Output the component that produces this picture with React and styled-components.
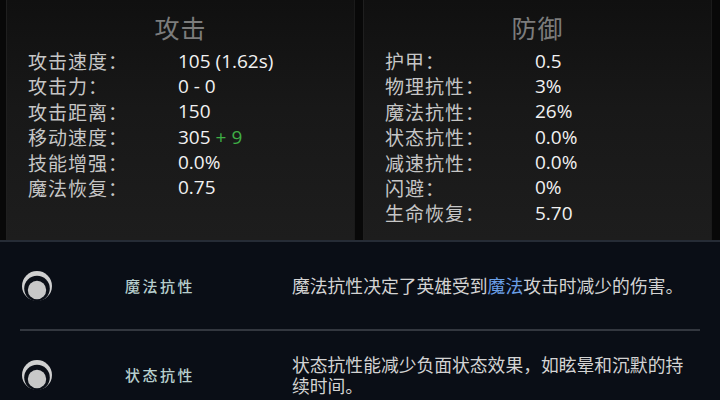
import React from "react";
import styled, { createGlobalStyle } from "styled-components";

const GlobalStyle = createGlobalStyle`
  html, body {
    margin: 0;
    padding: 0;
    background: #080808;
  }
  body {
    font-family: "Open Sans", "Noto Sans CJK SC", sans-serif;
  }
`;

const attack = [
  { label: "攻击速度：", value: "105 (1.62s)" },
  { label: "攻击力：", value: "0 - 0" },
  { label: "攻击距离：", value: "150" },
  { label: "移动速度：", value: "305", bonus: "+ 9" },
  { label: "技能增强：", value: "0.0%" },
  { label: "魔法恢复：", value: "0.75" },
];

const defense = [
  { label: "护甲：", value: "0.5" },
  { label: "物理抗性：", value: "3%" },
  { label: "魔法抗性：", value: "26%" },
  { label: "状态抗性：", value: "0.0%" },
  { label: "减速抗性：", value: "0.0%" },
  { label: "闪避：", value: "0%" },
  { label: "生命恢复：", value: "5.70" },
];

function RingIcon() {
  return (
    <svg width="32" height="32" viewBox="0 0 32 32">
      <circle cx="16" cy="16" r="15" fill="#d0d0d0" />
      <circle cx="16" cy="18.5" r="12.8" fill="#0b0f17" />
      <circle cx="16" cy="20" r="9.2" fill="#c8c8c8" />
    </svg>
  );
}

function StatPanel({ title, rows }) {
  return (
    <Panel>
      <PanelTitle>{title}</PanelTitle>
      <StatList>
        {rows.map((r) => (
          <StatRow key={r.label}>
            <StatLabel>{r.label}</StatLabel>
            <StatValue>
              {r.value}
              {r.bonus && <Bonus>{r.bonus}</Bonus>}
            </StatValue>
          </StatRow>
        ))}
      </StatList>
    </Panel>
  );
}

export default function App() {
  return (
    <Screen>
      <GlobalStyle />
      <TopArea>
        <StatPanel title="攻击" rows={attack} />
        <StatPanel title="防御" rows={defense} />
      </TopArea>
      <InfoArea>
        <InfoRow>
          <IconCell>
            <RingIcon />
          </IconCell>
          <InfoName>魔法抗性</InfoName>
          <InfoDesc>
            魔法抗性决定了英雄受到<Highlight>魔法</Highlight>攻击时减少的伤害。
          </InfoDesc>
        </InfoRow>
        <InfoRow>
          <IconCell>
            <RingIcon />
          </IconCell>
          <InfoName>状态抗性</InfoName>
          <InfoDesc>
            状态抗性能减少负面状态效果，如眩晕和沉默的持续时间。
          </InfoDesc>
        </InfoRow>
      </InfoArea>
    </Screen>
  );
}

const Screen = styled.div`
  width: 720px;
  height: 400px;
  overflow: hidden;
  background: #080808;
  display: flex;
  flex-direction: column;
`;

const TopArea = styled.div`
  height: 240px;
  flex-shrink: 0;
  padding-left: 6px;
  padding-right: 8px;
  display: grid;
  grid-template-columns: 349px 349px;
  column-gap: 8px;
  box-sizing: border-box;
`;

const Panel = styled.div`
  background: linear-gradient(180deg, #101010 0%, #181818 45%, #1d1d1d 100%);
  border-left: 1px solid #1f1f1f;
  border-right: 1px solid #1a1a1a;
  padding: 11px 0 0 21px;
  box-sizing: border-box;
`;

const PanelTitle = styled.div`
  text-align: center;
  padding-right: 21px;
  font-family: "Noto Sans CJK SC", sans-serif;
  font-size: 25px;
  line-height: 32px;
  color: #7c7c7c;
  letter-spacing: 1px;
`;

const StatList = styled.div`
  margin-top: 4px;
  display: flex;
  flex-direction: column;
`;

const StatRow = styled.div`
  display: grid;
  grid-template-columns: 150px 1fr;
  height: 25.4px;
  align-items: center;
`;

const StatLabel = styled.span`
  font-family: "Noto Sans CJK SC", sans-serif;
  font-size: 19px;
  color: #c6c6c6;
  letter-spacing: 1px;
`;

const StatValue = styled.span`
  font-family: "Open Sans", "Noto Sans CJK SC", sans-serif;
  font-size: 19px;
  color: #f1f1f1;
`;

const Bonus = styled.span`
  color: #3fae45;
  margin-left: 5px;
`;

const InfoArea = styled.div`
  flex: 1;
  min-height: 0;
  border-top: 2px solid #262c36;
  background: #0a0e16;
  padding: 0 20px;
  display: flex;
  flex-direction: column;
`;

const InfoRow = styled.div`
  display: grid;
  grid-template-columns: 105px 167px 1fr;
  align-items: center;
  height: 87px;
  flex-shrink: 0;
  & + & {
    border-top: 2px solid #33373f;
  }
`;

const IconCell = styled.div`
  display: flex;
  align-items: center;
  padding-left: 1px;
`;

const InfoName = styled.span`
  font-family: "Noto Sans CJK SC", serif;
  font-size: 15px;
  font-weight: 500;
  letter-spacing: 2.5px;
  color: #b7cecd;
`;

const InfoDesc = styled.p`
  margin: 0;
  width: 404px;
  font-family: "Noto Sans CJK SC", sans-serif;
  font-size: 17.8px;
  line-height: 21px;
  color: #d3d3d3;
`;

const Highlight = styled.span`
  color: #6a9fe6;
`;
